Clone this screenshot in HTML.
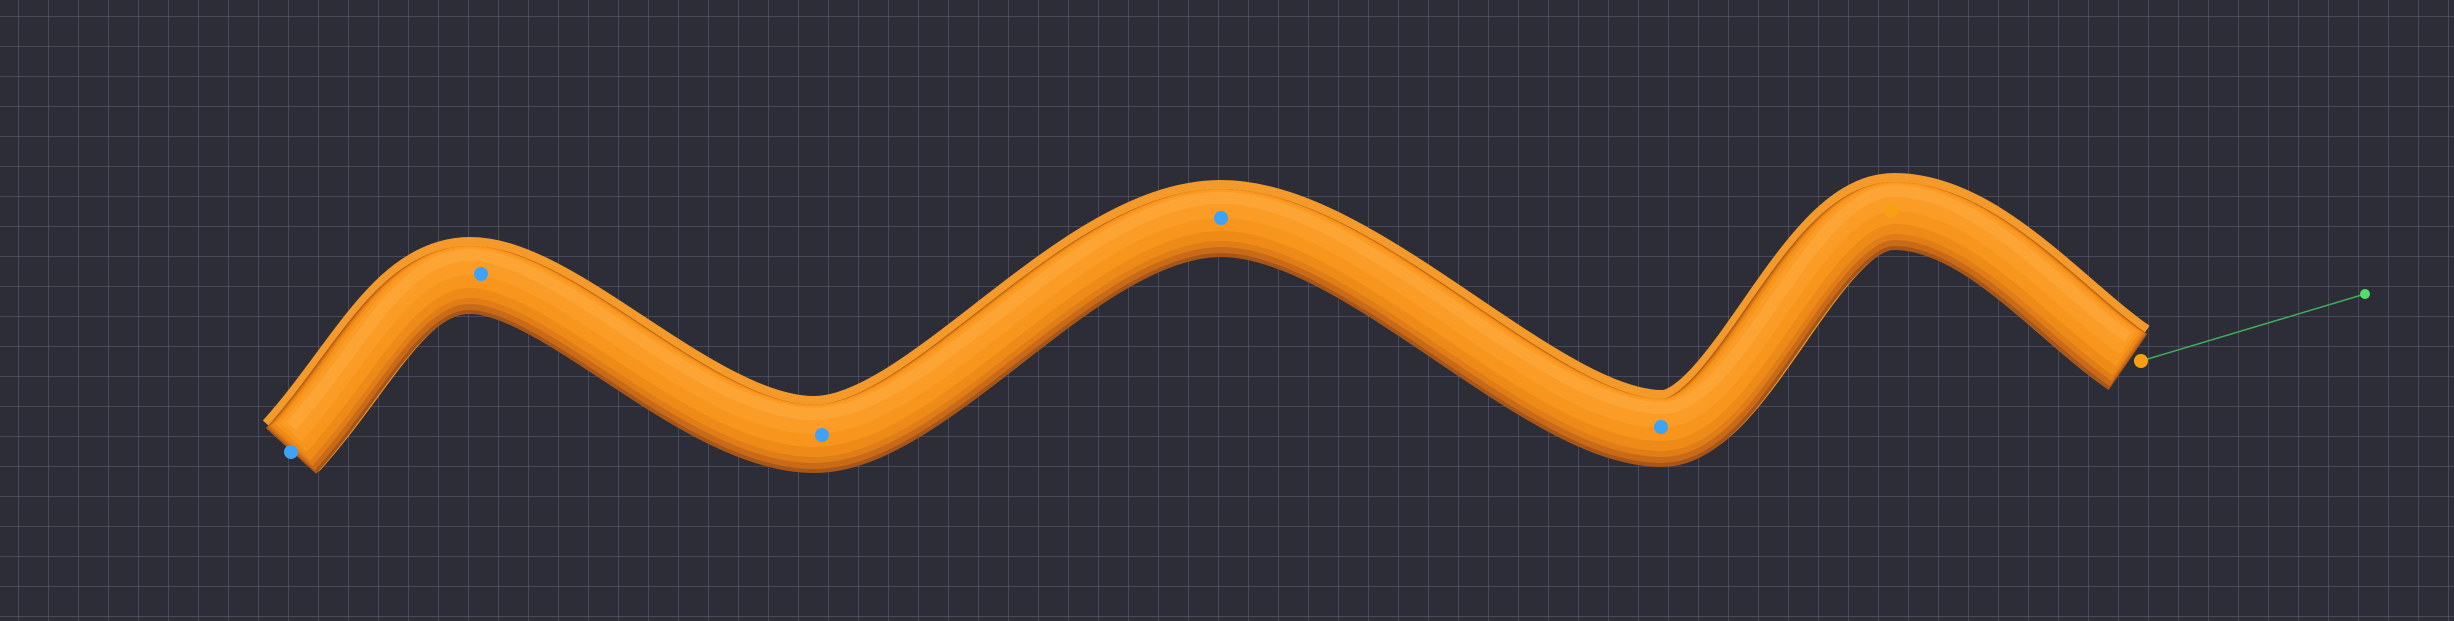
<!DOCTYPE html>
<html><head><style>
html,body{margin:0;padding:0;}
body{width:2454px;height:621px;overflow:hidden;background:#2d2d38;
background-image:linear-gradient(to right,rgba(110,110,135,.42) 1px,transparent 1px),linear-gradient(to bottom,rgba(110,110,135,.42) 1px,transparent 1px);
background-size:30px 30px;background-position:18px 16px;}
svg{position:absolute;left:0;top:0;}
</style></head><body>
<svg width="2454" height="621" viewBox="0 0 2454 621">
<defs>
<path id="p" d="M291,446 C360,370 400,275 470,275 C560,275 700,434 814,434 C930,434 1080,218 1221,218 C1360,218 1540,428 1662,428 C1740,428 1810,211 1894,211 C1980,211 2060,310 2128,357"/>
</defs>
<g fill="none" stroke-linecap="butt">
<use href="#p" stroke="#f39a2a" stroke-width="76"/>
<use href="#p" stroke="#a85518" stroke-width="68" transform="translate(0,5)"/>
<use href="#p" stroke="#c96a18" stroke-width="64" transform="translate(0,3)"/>
<use href="#p" stroke="#e07d16" stroke-width="58" transform="translate(0,0)"/>
<use href="#p" stroke="#ee8a18" stroke-width="52" transform="translate(0,-3)"/>
<use href="#p" stroke="#f7951c" stroke-width="42" transform="translate(0,-8)"/>
<use href="#p" stroke="#fa9c26" stroke-width="28" transform="translate(0,-14)"/>
<use href="#p" stroke="#fca434" stroke-width="12" transform="translate(0,-20)"/>
</g>
<line x1="2141" y1="361" x2="2365" y2="294" stroke="#3fae5a" stroke-width="1.5"/>
<circle cx="2365" cy="294" r="5" fill="#4ee06a"/>
<circle cx="291" cy="452" r="7" fill="#3fa3f5"/>
<circle cx="481" cy="274" r="7" fill="#3fa3f5"/>
<circle cx="822" cy="435" r="7" fill="#3fa3f5"/>
<circle cx="1221" cy="218" r="7" fill="#3fa3f5"/>
<circle cx="1661" cy="427" r="7" fill="#3fa3f5"/>
<circle cx="1891" cy="211" r="7" fill="#f8a010"/>
<circle cx="2141" cy="361" r="7" fill="#f8a010"/>
</svg>
</body></html>
